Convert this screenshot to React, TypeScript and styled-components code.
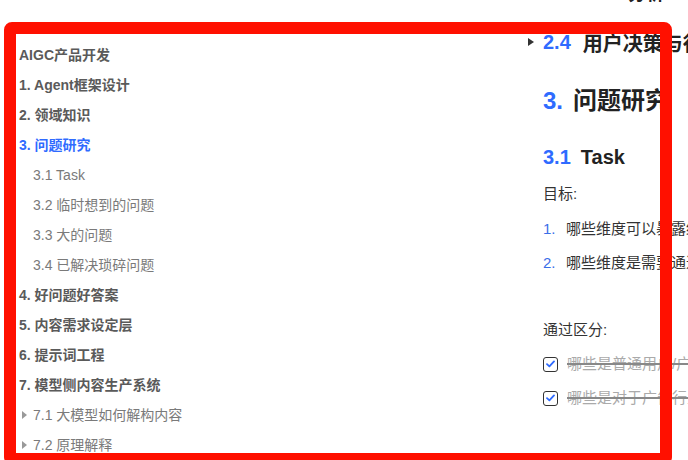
import React from "react";
import styled, { createGlobalStyle } from "styled-components";

const Global = createGlobalStyle`
  html, body { margin: 0; padding: 0; background: #fff; }
  body { font-family: "Liberation Sans", Arial, "Noto Sans CJK SC", sans-serif; }
`;

const BLUE = "#2f6bff";

const Page = styled.div`
  position: relative;
  width: 688px;
  height: 460px;
  overflow: hidden;
  display: flex;
  background: #fff;
`;

const Sidebar = styled.nav`
  width: 520px;
  flex-shrink: 0;
  box-sizing: border-box;
  padding: 16px 0 0 19px;
  display: flex;
  flex-direction: column;
`;

const TopHint = styled.div`
  height: 24px;
  line-height: 16px;
  padding: 3px 0 0 3px;
  box-sizing: border-box;
  font-size: 13px;
  color: #888;
`;

const Item = styled.div<{ $active?: boolean; $sub?: boolean }>`
  height: 30px;
  line-height: 30px;
  font-size: 14px;
  white-space: nowrap;
  font-weight: ${(p) => (p.$sub ? 400 : 700)};
  color: ${(p) => (p.$active ? BLUE : p.$sub ? "#7a7a7a" : "#5a5a5a")};
  padding-left: ${(p) => (p.$sub ? "14px" : "0")};
  display: flex;
  align-items: center;
`;

const SideCaret = styled.span`
  flex-shrink: 0;
  width: 0;
  height: 0;
  border-left: 5px solid #999;
  border-top: 4px solid transparent;
  border-bottom: 4px solid transparent;
  margin-left: -11px;
  margin-right: 6px;
`;

const Content = styled.main`
  flex: 1;
  min-width: 0;
  box-sizing: border-box;
  padding-left: 23px;
  display: flex;
  flex-direction: column;
  align-items: flex-start;
  white-space: nowrap;
  color: #222;
`;

const CutLine = styled.div`
  margin-top: -16px;
  height: 20px;
  line-height: 20px;
  padding-left: 85px;
  font-size: 18px;
  font-weight: 700;
  color: #222;
`;

const H2Row = styled.div`
  margin-top: 24px;
  margin-left: -15px;
  height: 28px;
  display: flex;
  align-items: center;
  font-size: 20px;
  font-weight: 700;
`;

const Caret = styled.span`
  flex-shrink: 0;
  width: 0;
  height: 0;
  border-left: 6px solid #333;
  border-top: 4.5px solid transparent;
  border-bottom: 4.5px solid transparent;
  margin-right: 9px;
`;

const Num = styled.span<{ $gap: number }>`
  flex-shrink: 0;
  color: ${BLUE};
  margin-right: ${(p) => p.$gap}px;
`;

const H1 = styled.div`
  margin-top: 27px;
  height: 36px;
  line-height: 36px;
  font-size: 24px;
  font-weight: 700;
`;

const H3 = styled.div`
  margin-top: 24px;
  height: 28px;
  line-height: 28px;
  font-size: 20px;
  font-weight: 700;
`;

const Para = styled.div<{ $mt: number }>`
  margin-top: ${(p) => p.$mt}px;
  line-height: 24px;
  font-size: 15px;
  color: #333;
`;

const ListItem = styled.div<{ $mt: number }>`
  margin-top: ${(p) => p.$mt}px;
  display: flex;
  align-items: center;
  line-height: 24px;
  font-size: 15px;
  color: #333;
`;

const ListNum = styled.span`
  flex-shrink: 0;
  width: 23px;
  color: #3a6ee8;
`;

const TaskItem = styled.div<{ $mt: number }>`
  margin-top: ${(p) => p.$mt}px;
  display: flex;
  align-items: center;
  line-height: 24px;
  font-size: 15px;
`;

const Box = styled.span`
  flex-shrink: 0;
  width: 15px;
  height: 15px;
  box-sizing: border-box;
  border: 1.5px solid #333;
  border-radius: 3px;
  margin-right: 9px;
  display: flex;
  align-items: center;
  justify-content: center;
`;

const Done = styled.span`
  color: #aaa;
  text-decoration: line-through;
  text-decoration-color: #888;
  text-decoration-thickness: 2px;
`;

const Frame = styled.div`
  position: absolute;
  left: 4px;
  top: 22px;
  width: 668px;
  height: 443px;
  box-sizing: border-box;
  border: 12px solid #ff1000;
  border-radius: 8px;
  pointer-events: none;
`;

const Check = () => (
  <svg width="9" height="8" viewBox="0 0 9 8">
    <path d="M1 4.2 L3.4 6.4 L8 1.4" fill="none" stroke="#2f6bff" strokeWidth="1.8" strokeLinecap="round" strokeLinejoin="round" />
  </svg>
);

const outline: { text: string; sub?: boolean; active?: boolean; caret?: boolean }[] = [
  { text: "AIGC产品开发" },
  { text: "1. Agent框架设计" },
  { text: "2. 领域知识" },
  { text: "3. 问题研究", active: true },
  { text: "3.1 Task", sub: true },
  { text: "3.2 临时想到的问题", sub: true },
  { text: "3.3 大的问题", sub: true },
  { text: "3.4 已解决琐碎问题", sub: true },
  { text: "4. 好问题好答案" },
  { text: "5. 内容需求设定层" },
  { text: "6. 提示词工程" },
  { text: "7. 模型侧内容生产系统" },
  { text: "7.1 大模型如何解构内容", sub: true, caret: true },
  { text: "7.2 原理解释", sub: true, caret: true },
];

export default function App() {
  return (
    <>
      <Global />
      <Page>
        <Sidebar>
          <TopHint>//</TopHint>
          {outline.map((o) => (
            <Item key={o.text} $sub={o.sub} $active={o.active}>
              {o.caret && <SideCaret />}
              {o.text}
            </Item>
          ))}
        </Sidebar>
        <Content>
          <CutLine>分析</CutLine>
          <H2Row>
            <Caret />
            <Num $gap={12}>2.4</Num>用户决策与行为
          </H2Row>
          <H1>
            <Num $gap={10}>3.</Num>问题研究
          </H1>
          <H3>
            <Num $gap={10}>3.1</Num>Task
          </H3>
          <Para $mt={11}>目标:</Para>
          <ListItem $mt={11}>
            <ListNum>1.</ListNum>哪些维度可以暴露给用户
          </ListItem>
          <ListItem $mt={10}>
            <ListNum>2.</ListNum>哪些维度是需要通过交互获取
          </ListItem>
          <Para $mt={43}>通过区分:</Para>
          <TaskItem $mt={10}>
            <Box><Check /></Box>
            <Done>哪些是普通用户/广告主都关心的</Done>
          </TaskItem>
          <TaskItem $mt={10}>
            <Box><Check /></Box>
            <Done>哪些是对于广告行业特有的</Done>
          </TaskItem>
        </Content>
        <Frame />
      </Page>
    </>
  );
}
